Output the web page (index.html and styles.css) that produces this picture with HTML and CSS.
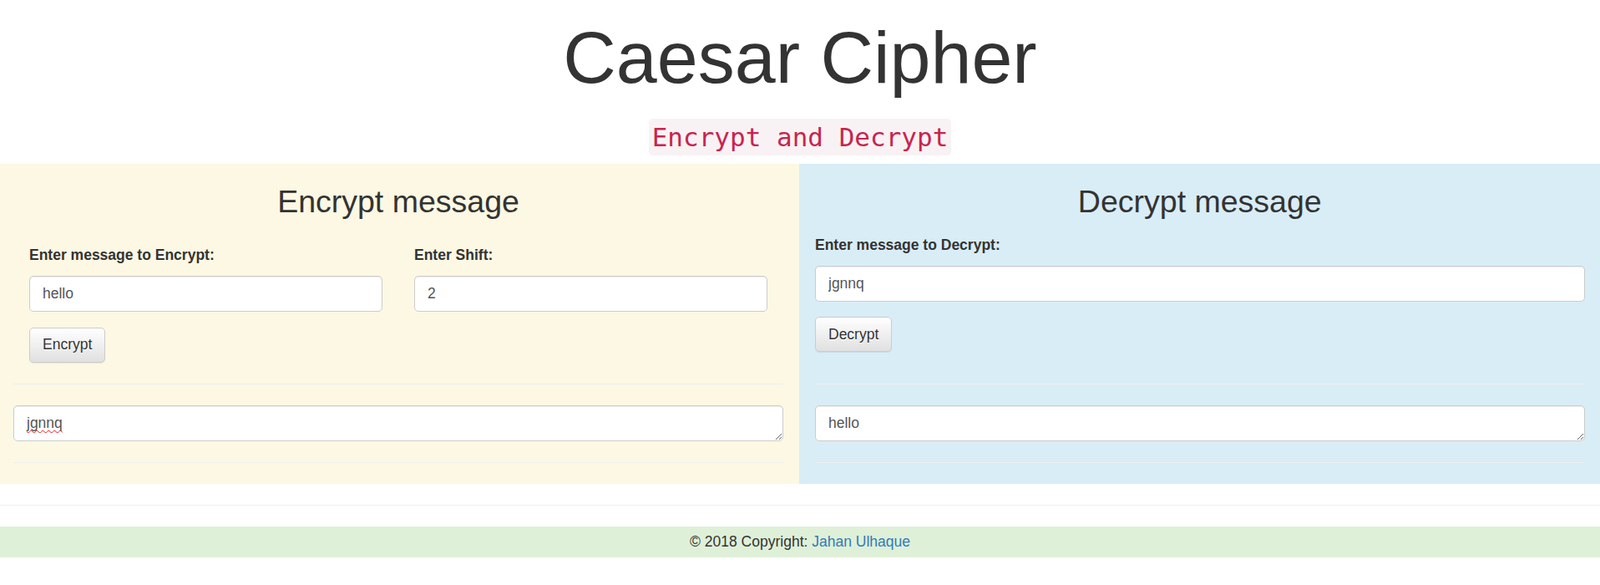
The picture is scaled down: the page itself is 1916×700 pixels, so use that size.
FILE: index.html
```html
<!DOCTYPE html>
<html lang="en">
<head>
<meta charset="utf-8">
<title>Caesar Cipher</title>
<link rel="stylesheet" href="styles.css">
</head>
<body>
<header class="masthead">
  <h1 class="title">Caesar Cipher</h1>
  <div class="subtitle"><code class="tag">Encrypt and Decrypt</code></div>
</header>
<main class="panels">
  <section class="panel panel-encrypt">
    <div class="panel-top">
      <h2 class="panel-title">Encrypt message</h2>
      <form class="form form-encrypt">
        <div class="field-row">
          <div class="field">
            <label class="label">Enter message to Encrypt:</label>
            <input class="input" type="text" value="hello">
          </div>
          <div class="field">
            <label class="label">Enter Shift:</label>
            <input class="input" type="text" value="2">
          </div>
        </div>
        <button class="btn" type="button">Encrypt</button>
      </form>
    </div>
    <hr class="rule">
    <textarea class="input output misspelled" rows="1">jgnnq</textarea>
    <hr class="rule">
  </section>
  <section class="panel panel-decrypt">
    <div class="panel-top">
      <h2 class="panel-title">Decrypt message</h2>
      <form class="form form-decrypt">
        <div class="field">
          <label class="label">Enter message to Decrypt:</label>
          <input class="input" type="text" value="jgnnq">
        </div>
        <button class="btn" type="button">Decrypt</button>
      </form>
    </div>
    <hr class="rule">
    <textarea class="input output" rows="1">hello</textarea>
    <hr class="rule">
  </section>
</main>
<hr class="page-rule">
<footer class="footer">© 2018 Copyright: <a class="footer-link" href="#">Jahan Ulhaque</a></footer>
</body>
</html>
```
FILE: styles.css
```css
* { box-sizing: border-box; }

html, body {
  margin: 0;
  padding: 0;
  background: #fff;
}

body {
  font-family: "Liberation Sans", Arial, sans-serif;
  font-size: 17.5px;
  line-height: 25px;
  color: #333;
}

.masthead {
  padding-top: 20px;
  text-align: center;
}

.title {
  margin: 0;
  font-size: 88px;
  line-height: 98px;
  font-weight: normal;
  color: #333;
}

.subtitle {
  display: flex;
  justify-content: center;
  margin: 24px 0 10px;
}

.tag {
  display: block;
  height: 44px;
  line-height: 44px;
  padding: 0 4px;
  font-family: "DejaVu Sans Mono", "Liberation Mono", monospace;
  font-size: 31px;
  color: #c7254e;
  background: #f9f2f4;
  border-radius: 5px;
}

.panels {
  display: grid;
  grid-template-columns: 957px 959px;
}

.panel {
  display: flex;
  flex-direction: column;
}

.panel-encrypt {
  background: #fcf8e3;
  padding: 0 19px 0 16px;
}

.panel-decrypt {
  background: #d9edf7;
  padding: 0 18.5px 0 19px;
}

.panel-top {
  height: 238px;
  padding-top: 25px;
}

.panel-title {
  margin: 0 0 12.5px;
  font-size: 37.5px;
  line-height: 41.25px;
  font-weight: normal;
  text-align: center;
}

.form-encrypt {
  padding: 18px 19px 0;
}

.form-decrypt {
  padding-top: 5.75px;
}

.field-row {
  display: grid;
  grid-template-columns: 1fr 1fr;
  column-gap: 38px;
}

.field {
  margin-bottom: 18.75px;
}

.label {
  display: block;
  font-weight: bold;
  line-height: 25px;
  margin-bottom: 12.5px;
}

.input {
  display: block;
  width: 100%;
  height: 42.5px;
  margin: 0;
  padding: 7.5px 15px;
  font-family: "Liberation Sans", Arial, sans-serif;
  font-size: 17.5px;
  line-height: 25px;
  color: #555;
  background: #fff;
  border: 1px solid #ccc;
  border-radius: 5px;
  box-shadow: inset 0 1px 1px rgba(0, 0, 0, 0.075);
  outline: none;
}

.output {
  resize: vertical;
  overflow: hidden;
}

.misspelled {
  text-decoration: underline wavy #e41b1b;
  text-decoration-thickness: 1px;
  text-decoration-skip-ink: none;
  text-underline-offset: 2px;
}

.btn {
  display: block;
  height: 42px;
  padding: 7.5px 15px;
  font-family: "Liberation Sans", Arial, sans-serif;
  font-size: 17.5px;
  line-height: 25px;
  color: #333;
  background: linear-gradient(to bottom, #fff 0%, #e0e0e0 100%);
  border: 1px solid #ccc;
  border-radius: 5px;
  text-shadow: 0 1px 0 #fff;
  box-shadow: inset 0 1px 0 rgba(255, 255, 255, 0.15), 0 1px 1px rgba(0, 0, 0, 0.075);
  cursor: pointer;
}

.rule {
  margin: 25px 0;
  border: 0;
  border-top: 1px solid #eee;
  height: 0;
}

.page-rule {
  margin: 25px 0;
  border: 0;
  border-top: 1px solid #eee;
  height: 0;
}

.footer {
  background: #dff0d8;
  padding: 6.25px 0;
  text-align: center;
  line-height: 25px;
}

.footer-link {
  color: #337ab7;
  text-decoration: none;
}
```
